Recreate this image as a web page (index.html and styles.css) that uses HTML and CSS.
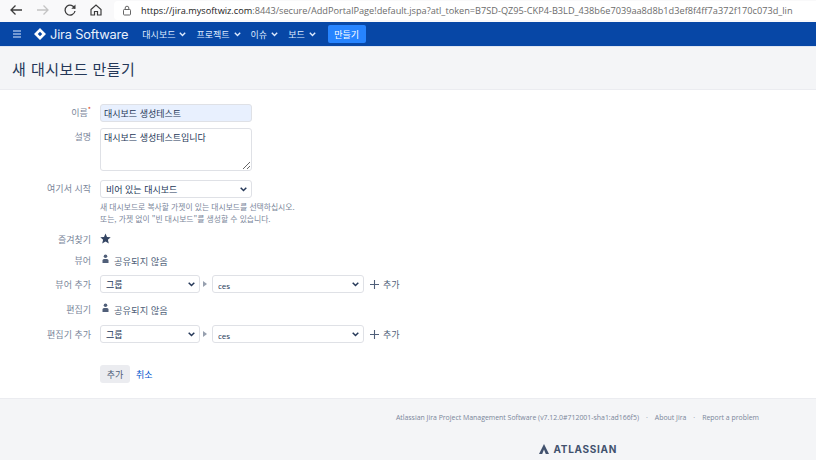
FILE: index.html
```html
<!DOCTYPE html>
<html lang="ko">
<head>
<meta charset="utf-8">
<title>새 대시보드 만들기</title>
<link rel="stylesheet" href="styles.css">
</head>
<body>
<div class="browser">
  <svg class="bicon back" width="14" height="14" viewBox="0 0 14 14"><path d="M13 7H2M6.500 2.500 2 7l4.500 4.500" fill="none" stroke="#3c3c3c" stroke-width="1.300"/></svg>
  <svg class="bicon fwd" width="14" height="14" viewBox="0 0 14 14"><path d="M1 7h11M7.500 2.500 12 7l-4.500 4.500" fill="none" stroke="#c4c4c4" stroke-width="1.300"/></svg>
  <svg class="bicon reload" width="14" height="14" viewBox="0 0 14 14"><path d="M11.800 5.500A5 5 0 1 0 12 8" fill="none" stroke="#3c3c3c" stroke-width="1.300"/><path d="M12.500 1.500v4.300H8.300z" fill="#3c3c3c"/></svg>
  <svg class="bicon home" width="14" height="14" viewBox="0 0 14 14"><path d="M2 6.500 7 2l5 4.500V12H8.500V8.500h-3V12H2z" fill="none" stroke="#3c3c3c" stroke-width="1.200"/></svg>
  <div class="urlbox">
    <svg class="lock" width="10" height="11" viewBox="0 0 10 11"><rect x="1.500" y="4.500" width="7" height="5.500" rx=".8" fill="none" stroke="#666"/><path d="M3.200 4.500V3a1.800 1.800 0 0 1 3.600 0v1.500" fill="none" stroke="#666"/></svg>
    <span class="url"><span class="host">https://jira.mysoftwiz.com</span>:8443/secure/AddPortalPage!default.jspa?atl_token=B7SD-QZ95-CKP4-B3LD_438b6e7039aa8d8b1d3ef8f4ff7a372f170c073d_lin</span>
  </div>
</div>
<nav class="topnav">
  <svg class="burger" width="10" height="8" viewBox="0 0 10 8"><path d="M1 1h8M1 4h8M1 7h8" stroke="#deebff" stroke-width="1.200"/></svg>
  <div class="logo">
    <svg width="12" height="12" viewBox="0 0 12 12"><path d="M6 0 12 6 6 12 0 6zM6 3.800 3.800 6 6 8.200 8.200 6z" fill="#fff" fill-rule="evenodd"/></svg>
    <span>Jira Software</span>
  </div>
  <ul class="menu">
    <li>대시보드<svg class="caret" width="7" height="5" viewBox="0 0 7 5"><path d="M.8.800 3.500 3.500 6.200.8" fill="none" stroke="#deebff" stroke-width="1.400"/></svg></li>
    <li>프로젝트<svg class="caret" width="7" height="5" viewBox="0 0 7 5"><path d="M.8.800 3.500 3.500 6.200.8" fill="none" stroke="#deebff" stroke-width="1.400"/></svg></li>
    <li>이슈<svg class="caret" width="7" height="5" viewBox="0 0 7 5"><path d="M.8.800 3.500 3.500 6.200.8" fill="none" stroke="#deebff" stroke-width="1.400"/></svg></li>
    <li>보드<svg class="caret" width="7" height="5" viewBox="0 0 7 5"><path d="M.8.800 3.500 3.500 6.200.8" fill="none" stroke="#deebff" stroke-width="1.400"/></svg></li>
  </ul>
  <button class="create" type="button">만들기</button>
</nav>
<header class="pagehead"><h1>새 대시보드 만들기</h1></header>
<main class="formarea">
  <div class="row r-name">
    <label class="lbl">이름<sup class="req">*</sup></label>
    <input class="field name" type="text" value="대시보드 생성테스트">
  </div>
  <div class="row r-desc">
    <label class="lbl">설명</label>
    <textarea class="field desc">대시보드 생성테스트입니다</textarea>
  </div>
  <div class="row r-start">
    <label class="lbl">여기서 시작</label>
    <div class="ctl">
      <select class="sel wide"><option>비어 있는 대시보드</option></select>
      <p class="help">새 대시보드로 복사할 가젯이 있는 대시보드를 선택하십시오.<br>또는, 가젯 없이 "빈 대시보드"를 생성할 수 있습니다.</p>
    </div>
  </div>
  <div class="row r-fav">
    <label class="lbl">즐겨찾기</label>
    <svg class="star" width="11" height="11" viewBox="0 0 11 11"><path d="M5.500.500 7 3.900l3.700.3L7.900 6.700l.9 3.700-3.300-2-3.300 2 .9-3.700L.3 4.200 4 3.900z" fill="#344563"/></svg>
  </div>
  <div class="row r-view">
    <label class="lbl">뷰어</label>
    <span class="shared"><svg width="7" height="10" viewBox="0 0 7 10"><circle cx="3.500" cy="2.200" r="1.800" fill="#505f79"/><path d="M.5 9V6.500Q.5 5 2 5h3q1.500 0 1.500 1.500V9z" fill="#505f79"/></svg>공유되지 않음</span>
  </div>
  <div class="row r-add">
    <label class="lbl">뷰어 추가</label>
    <select class="sel type"><option>그룹</option></select>
    <svg class="tri" width="4" height="6" viewBox="0 0 4 6"><path d="M0 0 4 3 0 6z" fill="#97a0af"/></svg>
    <select class="sel group"><option>ces</option></select>
    <span class="add"><svg width="9" height="9" viewBox="0 0 9 9"><path d="M4.500 0v9M0 4.500h9" stroke="#505f79" stroke-width="1.100"/></svg>추가</span>
  </div>
  <div class="row r-edit">
    <label class="lbl">편집기</label>
    <span class="shared"><svg width="7" height="10" viewBox="0 0 7 10"><circle cx="3.500" cy="2.200" r="1.800" fill="#505f79"/><path d="M.5 9V6.500Q.5 5 2 5h3q1.500 0 1.500 1.500V9z" fill="#505f79"/></svg>공유되지 않음</span>
  </div>
  <div class="row r-add">
    <label class="lbl">편집기 추가</label>
    <select class="sel type"><option>그룹</option></select>
    <svg class="tri" width="4" height="6" viewBox="0 0 4 6"><path d="M0 0 4 3 0 6z" fill="#97a0af"/></svg>
    <select class="sel group"><option>ces</option></select>
    <span class="add"><svg width="9" height="9" viewBox="0 0 9 9"><path d="M4.500 0v9M0 4.500h9" stroke="#505f79" stroke-width="1.100"/></svg>추가</span>
  </div>
  <div class="actions">
    <button class="submit" type="button">추가</button>
    <a class="cancel" href="#">취소</a>
  </div>
</main>
<footer class="foot">
  <div class="footlinks">
    <span>Atlassian Jira Project Management Software (v7.12.0#712001-sha1:ad166f5)</span>
    <i>·</i><span>About Jira</span>
    <i>·</i><span>Report a problem</span>
  </div>
  <div class="atl">
    <svg width="10" height="10" viewBox="0 0 10 10"><path d="M5 0Q6.500 3 10 10H6.800Q5.500 6.500 5 5.500 4.500 6.500 3.200 10H0Q3.500 3 5 0z" fill="#42526e"/></svg>
    <span>ATLASSIAN</span>
  </div>
</footer>
</body>
</html>
```

FILE: styles.css
```css
* { box-sizing: border-box; }
html, body { margin: 0; padding: 0; }
body {
  width: 816px; height: 460px; overflow: hidden; background: #fff;
  font-family: "Noto Sans CJK KR", "Noto Sans", sans-serif; color: #172b4d; font-size: 9px;
}
.browser { height: 22px; display: flex; align-items: center; background: #f9f9fa; padding-left: 9px; }
.bicon { flex: none; margin-top: -3px; }
.fwd { margin-left: 13px; }
.reload { margin-left: 13px; }
.home { margin-left: 12px; }
.urlbox {
  margin-left: 11px; flex: 1; height: 19px; margin-top: -2px; background: #fff; border-radius: 4px 0 0 4px;
  display: flex; align-items: center; padding-left: 8px; overflow: hidden;
}
.lock { flex: none; }
.url { margin-left: 9px; font-family: "Open Sans", sans-serif; font-size: 9.200px; color: #6b6b6b; white-space: nowrap; }
.host { color: #222; }
.topnav {
  height: 25px; background: #0747a6; border-bottom: 1px solid #dfe6f2; display: flex; align-items: center; padding-left: 12px; color: #deebff;
}
.burger { flex: none; }
.logo { display: flex; align-items: center; margin-left: 12px; color: #fff; }
.logo span { margin-left: 4px; font-family: "Inter", "Open Sans", sans-serif; font-size: 12.800px; font-weight: 400; letter-spacing: -.15px; color: #e9f0fb; }
.menu { display: flex; list-style: none; margin: 0 0 0 14px; padding: 0; font-size: 9px; }
.menu li { display: flex; align-items: center; margin-right: 10px; }
.caret { margin-left: 4px; }
.create {
  height: 18px; width: 38px; margin-left: 2px; background: #2684ff; border: 0; border-radius: 2px; color: #fff;
  font: inherit; font-size: 9px; padding: 0;
}
.pagehead { height: 43px; background: #f4f5f7; border-bottom: 1px solid #ebecf0; display: flex; align-items: center; padding-left: 12px; }
h1 { margin: 0; font-size: 15px; font-weight: 400; color: #253858; letter-spacing: .45px; }
.formarea { height: 308px; padding-top: 14px; }
.row { display: flex; align-items: flex-start; }
.lbl { flex: none; width: 91px; margin-right: 9px; text-align: right; color: #7a869a; font-size: 9px; line-height: 17px; }
.req { color: #de350b; font-size: 7px; line-height: 0; }
.field {
  display: block; border: 1.500px solid #dfe1e6; border-radius: 3px; width: 152px; padding: 0 3px;
  font: inherit; font-size: 9px; color: #253858; outline: 0; background: #fff;
}
.name { height: 18px; background: #e8f0fe; }
.r-desc { margin-top: 6px; }
.desc { height: 43px; padding-top: 2px; line-height: 13px; }
.r-start { margin-top: 9px; }
.sel {
  display: block; height: 18px; border: 1.500px solid #dfe1e6; border-radius: 3px;
  background: #fff url("data:image/svg+xml,%3Csvg xmlns='http://www.w3.org/2000/svg' width='7' height='5'%3E%3Cpath d='M.7.700 3.500 3.500 6.300.7' fill='none' stroke='%23253858' stroke-width='1.500'/%3E%3C/svg%3E") no-repeat right 4px center;
  appearance: none; -webkit-appearance: none;
  font: inherit; font-size: 9px; color: #253858; padding: 1px 0 0 5px; outline: 0;
}
.wide { width: 152px; }
.help { margin: 3px 0 0; font-size: 7.800px; line-height: 12px; color: #7a869a; }
.r-fav { margin-top: 6px; height: 17px; align-items: center; }
.star { margin-top: -2px; }
.r-view { margin-top: 4px; height: 17px; align-items: center; }
.shared { display: flex; align-items: center; color: #505f79; font-size: 9.300px; }
.shared svg { margin: -3px 5px 0 2px; }
.r-add { margin-top: 6px; align-items: center; height: 18px; }
.r-edit { margin-top: 8px; height: 17px; align-items: center; }
.r-edit + .r-add { margin-top: 7px; }
.type { width: 100px; }
.tri { margin: 0 5px 0 3px; flex: none; }
.group { width: 152px; font-family: "Open Sans", sans-serif; font-size: 8px; padding-top: 2px; }
.add { display: flex; align-items: center; margin-left: 6px; color: #505f79; font-size: 9px; }
.add svg { margin-right: 4px; }
.actions { display: flex; align-items: center; margin: 22px 0 0 100px; }
.submit { width: 30px; height: 18px; border: 0; border-radius: 3px; background: #ebecf0; color: #505f79; font: inherit; font-size: 9px; padding: 0; }
.cancel { margin-left: 6px; color: #0052cc; text-decoration: none; font-size: 9px; }
.foot { height: 62px; background: #f4f5f7; border-top: 1px solid #ebecf0; }
.footlinks {
  display: flex; justify-content: flex-end; padding: 12px 57px 0 0; font-family: "Open Sans", sans-serif; font-size: 6.930px; line-height: 14px; color: #7a869a;
}
.footlinks i { font-style: normal; margin: 0 7px; }
.atl { display: flex; align-items: center; justify-content: flex-end; margin-top: 18px; padding-right: 199px; color: #42526e; }
.atl span { margin-left: 4px; font-family: "Inter", "Open Sans", sans-serif; font-size: 10px; font-weight: 700; letter-spacing: .7px; }
```
